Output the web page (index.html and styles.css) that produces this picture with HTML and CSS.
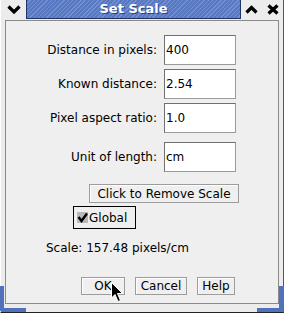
FILE: index.html
```html
<!DOCTYPE html>
<html lang="en">
<head>
    <meta charset="UTF-8">
    <title>Set Scale</title>
    <link rel="stylesheet" href="styles.css">
</head>
<body>
<div class="window">
    <div class="titlebar">
        <div class="tb-btn menu">
            <svg width="14" height="9" viewBox="0 0 14 9"><path d="M1.5 1.5 L7 7 L12.5 1.5" fill="none" stroke="#000" stroke-width="3.2"/></svg>
        </div>
        <div class="title">Set Scale</div>
        <div class="tb-btn">
            <svg width="13" height="9" viewBox="0 0 13 9"><path d="M1.5 7.5 L6.5 2.5 L11.5 7.5" fill="none" stroke="#000" stroke-width="3.2"/></svg>
        </div>
        <div class="tb-btn">
            <svg width="12" height="11" viewBox="0 0 12 11"><path d="M1.5 1.5 L10.5 9.5 M10.5 1.5 L1.5 9.5" fill="none" stroke="#000" stroke-width="3.2"/></svg>
        </div>
    </div>
    <div class="frame">
        <div class="panel">
            <div class="form">
                <label>Distance in pixels:</label><div class="field">400</div>
                <label>Known distance:</label><div class="field">2.54</div>
                <label>Pixel aspect ratio:</label><div class="field">1.0</div>
                <label class="unit">Unit of length:</label><div class="field unit">cm</div>
            </div>
            <button class="btn remove">Click to Remove Scale</button>
            <div class="global">
                <svg class="check" width="11" height="11" viewBox="0 0 11 11"><rect x="0" y="0" width="11" height="11" fill="#b8b8b8"/><path d="M1.5 5 L4.5 9 L10 1.5" fill="none" stroke="#000" stroke-width="2.4"/></svg>
                <span>Global</span>
            </div>
            <div class="scale">Scale: 157.48 pixels/cm</div>
            <div class="buttons">
                <button class="btn ok">OK</button>
                <button class="btn cancel">Cancel</button>
                <button class="btn help">Help</button>
            </div>
        </div>
    </div>
    <svg class="cursor" width="13" height="21" viewBox="0 0 13 21"><path d="M0.5 0.5 L0.5 16 L4 12.5 L7 19.5 L9.5 18.5 L6.5 11.5 L11.5 11.5 Z" fill="#000" stroke="#fff" stroke-width="1"/></svg>
</div>
</body>
</html>
```

FILE: styles.css
```css
body {
    margin: 0;
    font-family: "DejaVu Sans", sans-serif;
    font-size: 12px;
    color: #000;
    background: #fff;
}
.window {
    position: relative;
    width: 284px;
    height: 313px;
    box-sizing: border-box;
    background: #ececec;
    border-left: 1px solid #fff;
    border-right: 1px solid #555;
    border-bottom: 1px solid #222;
    display: flex;
    flex-direction: column;
}
.window::before, .window::after {
    content: "";
    position: absolute;
    bottom: 0;
    width: 22px;
    height: 22px;
}
.window::before {
    left: -1px;
    border-left: 4px solid #5271bd;
    border-bottom: 4px solid #5271bd;
    border-bottom-left-radius: 3px;
}
.window::after {
    right: -1px;
    border-right: 5px solid #5271bd;
    border-bottom: 4px solid #5271bd;
    border-bottom-right-radius: 3px;
}
.titlebar {
    display: flex;
    height: 19px;
    flex: none;
}
.tb-btn {
    width: 21px;
    display: flex;
    align-items: center;
    justify-content: center;
    background: #ececec;
}
.tb-btn.menu {
    width: 25px;
    border-right: 1px solid #1f3366;
}
.title {
    flex: 1;
    text-align: center;
    color: #fff;
    font-weight: bold;
    font-size: 13px;
    line-height: 18px;
    text-shadow: 1px 1px 0 #2a3f7a;
    border-bottom: 1px solid #1f3366;
    border-right: 1px solid #1f3366;
    background: repeating-linear-gradient(135deg, #5878c2 0, #5878c2 2px, #7391d2 2px, #7391d2 3px);
}
.frame {
    flex: 1;
    padding: 1px 4px 8px 4px;
    display: flex;
}
.panel {
    flex: 1;
    border: 1px solid #8a8a8a;
    background: #efefef;
    padding-top: 14px;
}
.form {
    display: grid;
    grid-template-columns: 112px 72px;
    column-gap: 7px;
    row-gap: 4px;
    margin-left: 39px;
}
.form label {
    text-align: right;
    line-height: 30px;
}
.form .unit {
    margin-top: 5px;
}
.field {
    height: 30px;
    box-sizing: border-box;
    background: #fff;
    border: 1px solid #9a9a9a;
    border-top-color: #707070;
    border-left-color: #707070;
    padding-left: 1px;
    line-height: 28px;
}
.btn {
    font-family: "DejaVu Sans", sans-serif;
    font-size: 12px;
    color: #000;
    background: #efefef;
    border: 1px solid #9c9c9c;
    box-shadow: inset 1px 1px 0 #fff;
    padding: 0;
    height: 19px;
    display: block;
}
.remove {
    margin: 12px 0 0 83px;
    width: 150px;
}
.global {
    margin: 3px 0 0 67px;
    width: 63px;
    height: 23px;
    box-sizing: border-box;
    border: 1px solid #000;
    display: flex;
    align-items: center;
    gap: 1px;
    padding-left: 3px;
}
.check {
    flex: none;
}
.scale {
    margin: 11px 0 0 40px;
    line-height: 16px;
}
.buttons {
    display: flex;
    gap: 10px;
    margin: 21px 0 0 75px;
}
.buttons .btn {
    height: 18px;
}
.ok { width: 44px; }
.cancel { width: 52px; }
.help { width: 38px; }
.cursor {
    position: absolute;
    left: 110px;
    top: 282px;
}
```
